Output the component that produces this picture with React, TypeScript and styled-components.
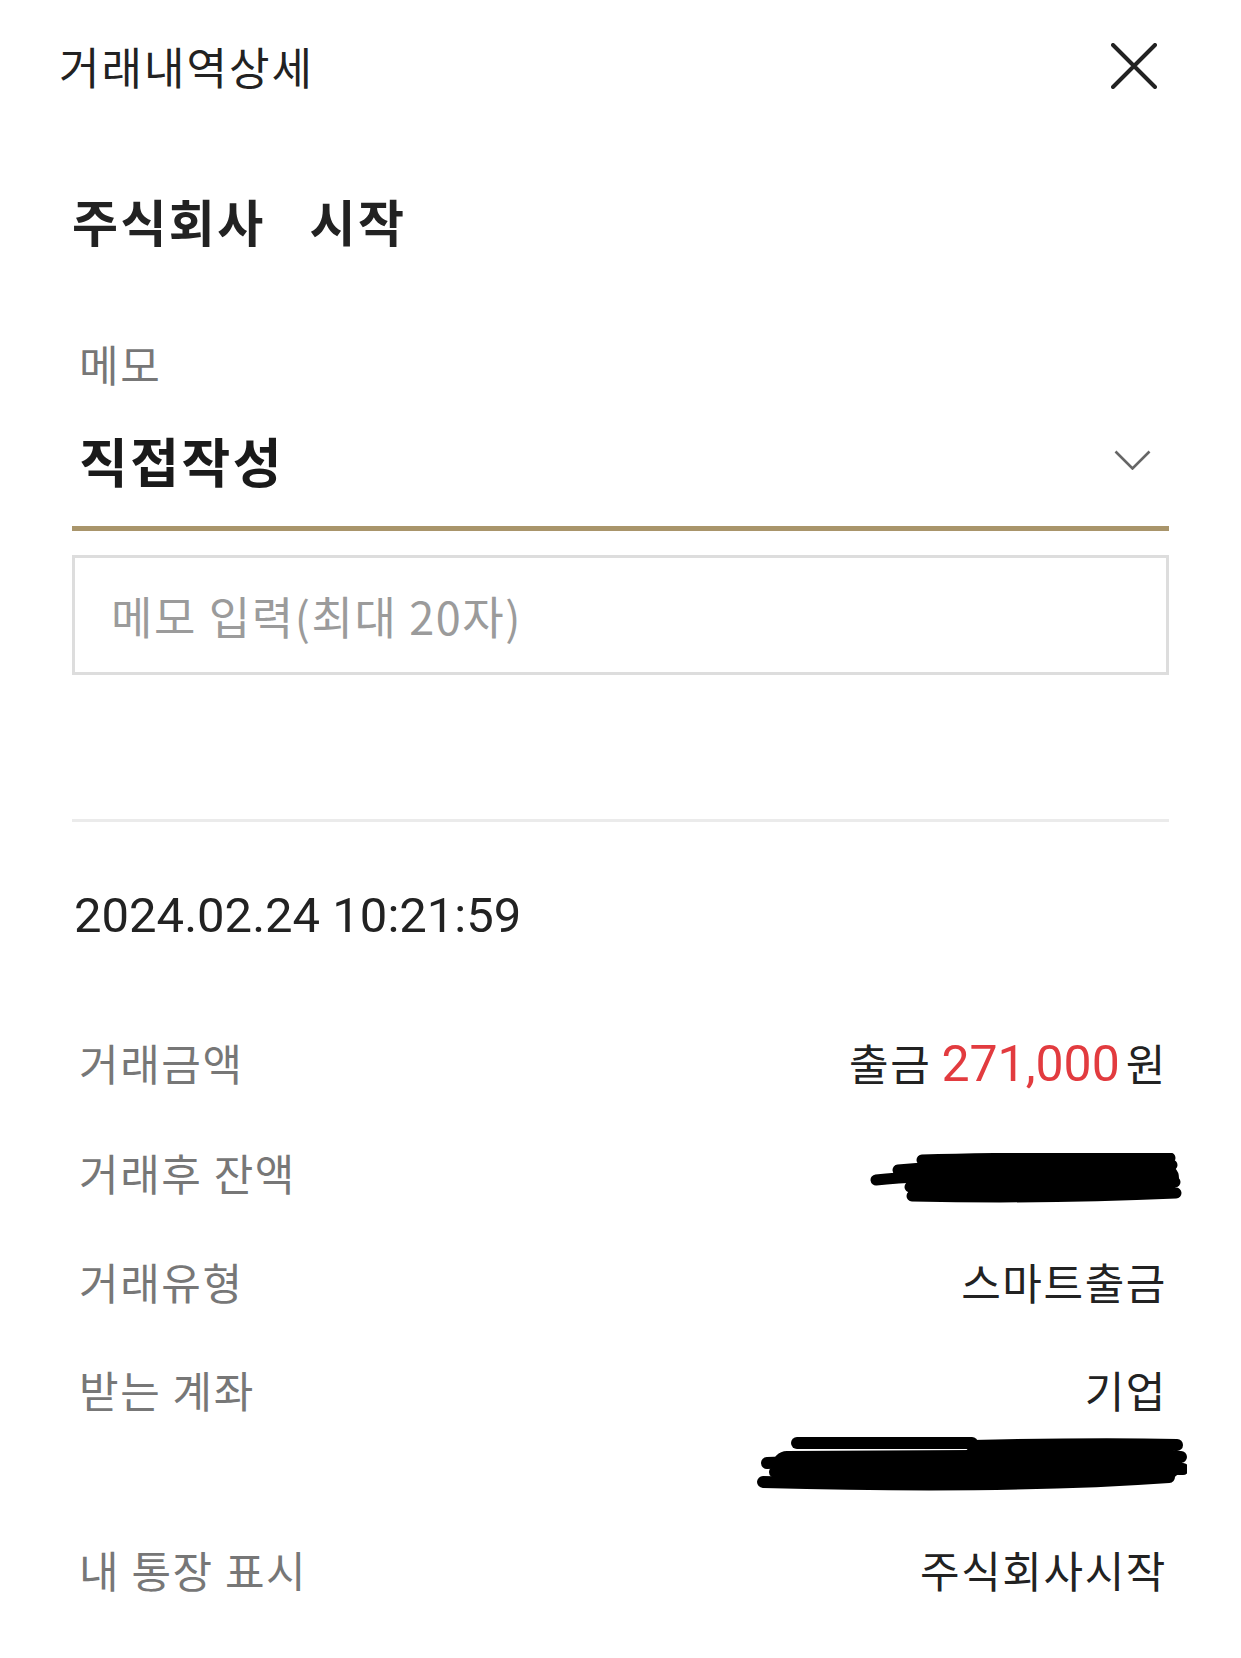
import React from "react";
import styled, { createGlobalStyle } from "styled-components";

const GlobalStyle = createGlobalStyle`
  body {
    margin: 0;
    background: #fff;
    font-family: "Noto Sans CJK KR", "Noto Sans", sans-serif;
    color: #222;
  }
`;

const KR = `"Noto Sans CJK KR", "Noto Sans", sans-serif`;
const NUM = `Roboto, "Noto Sans CJK KR", sans-serif`;

// header

const Header = styled.header`
  display: flex;
  align-items: center;
  justify-content: space-between;
  height: 132px;
  padding: 0 84px 0 59px;
`;

const HeaderTitle = styled.h1`
  margin: 0;
  font-family: ${KR};
  font-size: 44px;
  font-weight: 400;
  letter-spacing: 2px;
  line-height: 60px;
  color: #222;
`;

const CloseButton = styled.button`
  display: flex;
  padding: 0;
  border: 0;
  background: none;
  cursor: pointer;
`;

// body

const Body = styled.main`
  display: flex;
  flex-direction: column;
  padding: 0 72px;
`;

const Company = styled.div`
  display: flex;
  gap: 44px;
  margin-top: 58px;
  font-family: ${KR};
  font-size: 50px;
  font-weight: 700;
  letter-spacing: 2.4px;
  line-height: 60px;
  color: #222;
`;

// memo

const MemoLabel = styled.div`
  margin-top: 88px;
  padding-left: 7px;
  font-family: ${KR};
  font-size: 43px;
  letter-spacing: 1.6px;
  line-height: 50px;
  color: #777;
`;

const MemoSelect = styled.div`
  display: flex;
  align-items: center;
  justify-content: space-between;
  margin-top: 40px;
  padding: 0 18px 34px 7px;
  border-bottom: 5px solid #a9956b;
  cursor: pointer;
`;

const MemoSelectValue = styled.span`
  font-family: ${KR};
  font-size: 53px;
  font-weight: 700;
  letter-spacing: 2.5px;
  line-height: 64px;
  color: #1a1a1a;
`;

const MemoInput = styled.input`
  box-sizing: border-box;
  width: 100%;
  height: 120px;
  margin-top: 24px;
  padding: 0 36px;
  border: 3px solid #dddddd;
  border-radius: 0;
  outline: none;
  font-family: ${KR};
  font-size: 45px;
  letter-spacing: 1.6px;
  color: #222;
  &::placeholder {
    color: #9b9b9b;
  }
`;

const Divider = styled.hr`
  margin: 144px 0 0;
  border: 0;
  height: 3px;
  background: #ebebeb;
`;

// detail

const DateText = styled.div`
  margin-top: 64px;
  padding-left: 2px;
  font-family: ${NUM};
  font-size: 49px;
  line-height: 60px;
  color: #222;
`;

const DetailList = styled.dl`
  display: flex;
  flex-direction: column;
  gap: 48px;
  margin: 86px 0 60px;
  padding: 0 2px 0 7px;
`;

const DetailRow = styled.div`
  display: flex;
  align-items: flex-start;
  justify-content: space-between;
`;

const DetailLabel = styled.dt`
  font-family: ${KR};
  font-size: 43px;
  letter-spacing: 1.6px;
  line-height: 60px;
  color: #777;
`;

const DetailValue = styled.dd`
  display: flex;
  flex-direction: column;
  align-items: flex-end;
  margin: 0;
  font-family: ${KR};
  font-size: 43px;
  letter-spacing: 1.6px;
  line-height: 60px;
  color: #222;
  text-align: right;
`;

const Amount = styled.span`
  margin: 0 6px 0 10px;
  font-family: ${NUM};
  font-size: 50px;
  letter-spacing: 0;
  color: #e23b3f;
`;

interface ScribbleProps {
  $top: number;
  $right: number;
}

const Scribble = styled.svg<ScribbleProps>`
  display: block;
  margin-top: ${(p) => p.$top}px;
  margin-right: ${(p) => -p.$right}px;
`;

const CloseIcon = () => (
  <svg width="46" height="46" viewBox="0 0 46 46">
    <path
      d="M2 2L44 44M44 2L2 44"
      stroke="#222"
      strokeWidth="4"
      strokeLinecap="round"
      fill="none"
    />
  </svg>
);

const ChevronDown = () => (
  <svg width="37" height="20" viewBox="0 0 37 20">
    <polyline
      points="1.5,1.5 18.5,18.5 35.5,1.5"
      stroke="#666"
      strokeWidth="2.6"
      fill="none"
    />
  </svg>
);

const BalanceScribble = () => (
  <Scribble $top={11} $right={15} width="312" height="50" viewBox="0 0 312 50">
    <g stroke="#000" strokeWidth="11" strokeLinecap="round" fill="none">
      <path d="M6 27 C 60 21, 200 20, 300 22" />
      <path d="M28 17 C 120 9, 230 10, 302 12" />
      <path d="M52 7 C 150 4, 250 5, 300 5" />
      <path d="M40 34 C 130 31, 230 32, 305 29" />
      <path d="M42 43 C 140 45, 240 43, 306 40" />
      <path d="M60 25 L 295 25" strokeWidth="28" />
    </g>
  </Scribble>
);

const AccountScribble = () => (
  <Scribble $top={17} $right={20} width="430" height="55" viewBox="0 0 430 55">
    <g stroke="#000" strokeWidth="12" strokeLinecap="round" fill="none">
      <path d="M40 7 L 215 7" />
      <path d="M215 10 C 300 8, 380 8, 420 9" />
      <path d="M10 27 C 150 21, 300 20, 424 21" />
      <path d="M18 36 C 150 33, 300 31, 426 33" />
      <path d="M6 46 C 150 50, 300 49, 412 41" />
      <path d="M30 30 L 410 28" strokeWidth="30" />
    </g>
  </Scribble>
);

export default function App() {
  return (
    <>
      <GlobalStyle />
      <Header>
        <HeaderTitle>거래내역상세</HeaderTitle>
        <CloseButton aria-label="닫기">
          <CloseIcon />
        </CloseButton>
      </Header>
      <Body>
        <Company>
          <span>주식회사</span>
          <span>시작</span>
        </Company>

        <MemoLabel>메모</MemoLabel>
        <MemoSelect>
          <MemoSelectValue>직접작성</MemoSelectValue>
          <ChevronDown />
        </MemoSelect>
        <MemoInput placeholder="메모 입력(최대 20자)" />

        <Divider />

        <DateText>2024.02.24 10:21:59</DateText>

        <DetailList>
          <DetailRow>
            <DetailLabel>거래금액</DetailLabel>
            <DetailValue>
              <span>
                출금<Amount>271,000</Amount>원
              </span>
            </DetailValue>
          </DetailRow>
          <DetailRow>
            <DetailLabel>거래후 잔액</DetailLabel>
            <DetailValue>
              <BalanceScribble />
            </DetailValue>
          </DetailRow>
          <DetailRow>
            <DetailLabel>거래유형</DetailLabel>
            <DetailValue>스마트출금</DetailValue>
          </DetailRow>
          <DetailRow>
            <DetailLabel>받는 계좌</DetailLabel>
            <DetailValue>
              <span>기업</span>
              <AccountScribble />
            </DetailValue>
          </DetailRow>
          <DetailRow>
            <DetailLabel>내 통장 표시</DetailLabel>
            <DetailValue>주식회사시작</DetailValue>
          </DetailRow>
        </DetailList>
      </Body>
    </>
  );
}
